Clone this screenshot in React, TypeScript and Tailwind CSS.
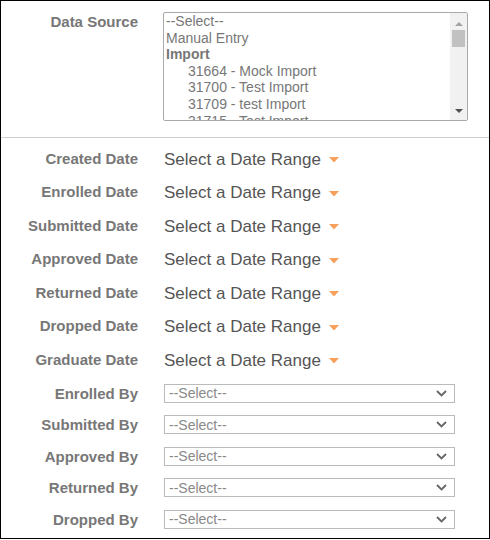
import React from 'react';

const dateFields = [
  'Created Date',
  'Enrolled Date',
  'Submitted Date',
  'Approved Date',
  'Returned Date',
  'Dropped Date',
  'Graduate Date',
];

const userFields = ['Enrolled By', 'Submitted By', 'Approved By', 'Returned By', 'Dropped By'];

const imports = ['31664 - Mock Import', '31700 - Test Import', '31709 - test Import', '31715 - Test Import'];

function Caret() {
  return (
    <svg width="10" height="6" viewBox="0 0 10 6" className="ml-[8px] mt-[1px]">
      <path d="M0 0 L10 0 L5 5.5 Z" fill="#f7a05c" />
    </svg>
  );
}

function Chevron() {
  return (
    <svg width="11" height="7" viewBox="0 0 11 7">
      <path d="M1 1 L5.5 5.5 L10 1" fill="none" stroke="#666" strokeWidth="1.8" />
    </svg>
  );
}

export default function App() {
  return (
    <div className="w-[490px] h-[539px] border border-black bg-white font-['Liberation_Sans',Arial,sans-serif] overflow-hidden">
      <div className="flex pt-[11px] pb-[16px] border-b border-[#cfcfcf]">
        <div className="w-[137px] text-right text-[15px] font-bold text-[#777] leading-[17px] pt-[1px]">
          Data Source
        </div>
        <div className="ml-[25px] w-[305px] h-[109px] border border-[#a9a9a9] rounded-[2px] flex overflow-hidden">
          <div className="flex-1 pl-[2px] text-[14px] leading-[16.6px] text-[#777] overflow-hidden">
            <div>--Select--</div>
            <div>Manual Entry</div>
            <div className="font-bold">Import</div>
            {imports.map((item) => (
              <div key={item} className="pl-[22px] whitespace-nowrap">
                {item}
              </div>
            ))}
          </div>
          <div className="w-[17px] bg-[#f1f1f1] flex flex-col items-center">
            <svg width="8" height="4" viewBox="0 0 8 4" className="mt-[9px]">
              <path d="M0 4 L4 0 L8 4 Z" fill="#a3a3a3" />
            </svg>
            <div className="mt-[4px] w-[13px] h-[17px] bg-[#c1c1c1]" />
            <div className="flex-1" />
            <svg width="8" height="4" viewBox="0 0 8 4" className="mb-[7px]">
              <path d="M0 0 L8 0 L4 4 Z" fill="#505050" />
            </svg>
          </div>
        </div>
      </div>

      <div className="pt-[5px]">
        {dateFields.map((label) => (
          <div key={label} className="flex items-center h-[33.5px]">
            <div className="w-[137px] text-right text-[15px] font-bold text-[#777] leading-[17px] -mt-[3px]">
              {label}
            </div>
            <div className="ml-[26px] flex items-center text-[17px] text-[#555] leading-[20px]">
              Select a Date Range
              <Caret />
            </div>
          </div>
        ))}
        {userFields.map((label) => (
          <div key={label} className="flex items-center h-[31.5px]">
            <div className="w-[137px] text-right text-[15px] font-bold text-[#777] leading-[17px]">
              {label}
            </div>
            <div className="ml-[26px] w-[291px] h-[19px] border border-[#bbb] flex items-center justify-between pl-[4px] pr-[7px]">
              <span className="text-[14px] text-[#888] leading-[16px]">--Select--</span>
              <Chevron />
            </div>
          </div>
        ))}
      </div>
    </div>
  );
}
